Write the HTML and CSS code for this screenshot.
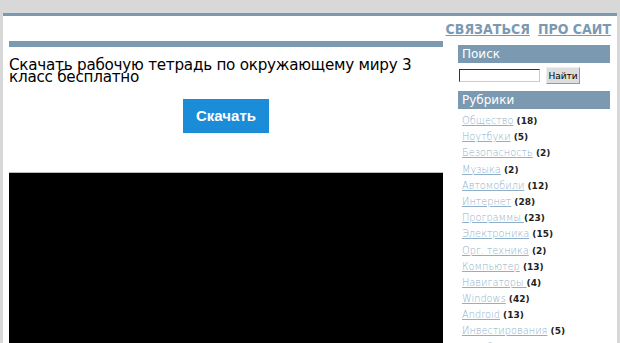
FILE: index.html
```html
<!DOCTYPE html>
<html lang="ru">
<head>
<meta charset="UTF-8">
<title>Скачать рабочую тетрадь по окружающему миру 3 класс бесплатно</title>
<link rel="stylesheet" href="styles.css">
</head>
<body>
<div class="page">
    <div class="top">
        <a href="#">СВЯЗАТЬСЯ</a>
        <a href="#">ПРО САИТ</a>
    </div>
    <div class="wrap">
        <div class="main">
            <div class="bar"></div>
            <h1>Скачать рабочую тетрадь по окружающему миру 3 класс бесплатно</h1>
            <div class="dl"><a class="btn" href="#">Скачать</a></div>
            <div class="video"></div>
        </div>
        <div class="side">
            <h3>Поиск</h3>
            <form class="search">
                <input type="text">
                <button type="button">Найти</button>
            </form>
            <h3>Рубрики</h3>
            <ul class="cats">
                <li><a href="#">Общество</a> (18)</li>
                <li><a href="#">Ноутбуки</a> (5)</li>
                <li><a href="#">Безопасность</a> (2)</li>
                <li><a href="#">Музыка</a> (2)</li>
                <li><a href="#">Автомобили</a> (12)</li>
                <li><a href="#">Интернет</a> (28)</li>
                <li><a href="#">Программы </a> (23)</li>
                <li><a href="#">Электроника</a> (15)</li>
                <li><a href="#">Орг. техника</a> (2)</li>
                <li><a href="#">Компьютер</a> (13)</li>
                <li><a href="#">Навигаторы </a> (4)</li>
                <li><a href="#">Windows</a> (42)</li>
                <li><a href="#">Android</a> (13)</li>
                <li><a href="#">Инвестирования</a> (5)</li>
                <li><a href="#">Заработок</a> (7)</li>
            </ul>
        </div>
    </div>
</div>
</body>
</html>
```
FILE: styles.css
```css
body {
    margin: 0;
    background-color: #d8d8d8;
    font-family: "DejaVu Sans", Verdana, sans-serif;
    overflow: hidden;
}

.page {
    margin: 13px 3px 0 3px;
    background-color: #fff;
    border-top: 3px solid #7b9ab0;
    height: 400px;
}

.top {
    text-align: right;
    padding: 3px 6px 0 0;
    height: 22px;
}

.top a {
    font-family: "DejaVu Sans Condensed", "DejaVu Sans", sans-serif;
    font-weight: bold;
    font-size: 14px;
    color: #7b9ab2;
    margin-left: 3px;
}

.wrap {
    display: flex;
}

.main {
    width: 434px;
    margin-left: 6px;
}

.bar {
    height: 6px;
    background-color: #7b9ab0;
}

h1 {
    font-weight: normal;
    font-size: 15.2px;
    letter-spacing: -0.25px;
    line-height: 12px;
    margin: 12px 0 0 0;
    color: #000;
}

.dl {
    text-align: center;
    margin-top: 16px;
}

.btn {
    display: inline-block;
    width: 86px;
    height: 34px;
    line-height: 34px;
    background-color: #1a8cd8;
    color: #fff;
    font-family: "Liberation Sans", Arial, sans-serif;
    font-weight: bold;
    font-size: 15px;
    text-decoration: none;
}

.video {
    margin-top: 39px;
    height: 300px;
    background-color: #000;
    border-top: 1px solid #bbb;
}

.side {
    width: 152px;
    margin-left: 15px;
    padding-top: 4px;
}

.side h3 {
    margin: 0;
    background-color: #7b9ab2;
    color: #fff;
    font-weight: normal;
    font-size: 12px;
    height: 18px;
    line-height: 18px;
    padding-left: 4px;
}

.search {
    margin: 4px 0 7px 1px;
    display: flex;
    align-items: center;
}

.search input {
    width: 81px;
    height: 13px;
    padding: 0;
    border: 1px solid #333;
    border-right-color: #ccc;
    border-bottom-color: #ccc;
    box-sizing: border-box;
}

.search button {
    margin-left: 6px;
    height: 17px;
    width: 34px;
    padding: 0;
    font-size: 9px;
    font-family: "DejaVu Sans", sans-serif;
    background-color: #ddd;
    border: 1px solid #999;
    border-top-color: #eee;
    border-left-color: #eee;
}

.cats {
    list-style-type: none;
    margin: 4px 0 0 4px;
    padding: 0;
    font-size: 9px;
    font-weight: bold;
    color: #222;
}

.cats li {
    height: 16.2px;
    line-height: 16px;
}

.cats a {
    font-size: 9.8px;
    font-weight: 200;
    color: #8fb0ca;
}
```
